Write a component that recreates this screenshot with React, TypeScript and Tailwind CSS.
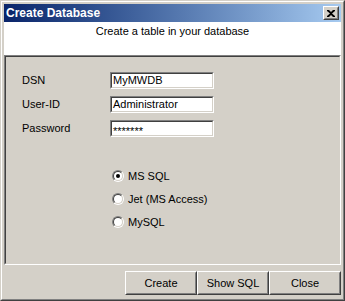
import React from 'react';

const Field: React.FC<{ label: string; value: string; masked?: boolean }> = ({ label, value, masked }) => (
    <div className="flex items-center h-[17px]">
        <span className="w-[88px] shrink-0">{label}</span>
        <div className="w-[104px] h-[17px] border border-t-[#808080] border-l-[#808080] border-r-white border-b-white">
            <div className="h-full border border-t-[#404040] border-l-[#404040] border-r-[#d4d0c8] border-b-[#d4d0c8] bg-white pl-[1px] leading-[13px] overflow-hidden">
                {masked ? <span className="inline-block pt-[3px] text-[11px] tracking-[0px]">{value}</span> : value}
            </div>
        </div>
    </div>
);

const Radio: React.FC<{ label: string; checked?: boolean }> = ({ label, checked }) => (
    <div className="flex items-center gap-[4px] h-[14px]">
        <div className="w-[12px] h-[12px] rounded-full border border-t-[#808080] border-l-[#808080] border-r-white border-b-white shrink-0">
            <div className="w-full h-full rounded-full border border-t-[#404040] border-l-[#404040] border-r-[#d4d0c8] border-b-[#d4d0c8] bg-white flex items-center justify-center">
                {checked && <div className="w-[4px] h-[4px] rounded-full bg-black" />}
            </div>
        </div>
        <span>{label}</span>
    </div>
);

const Button: React.FC<{ label: string }> = ({ label }) => (
    <div className="w-[72px] h-[24px] border border-t-white border-l-white border-r-[#404040] border-b-[#404040]">
        <div className="h-full border border-t-[#d4d0c8] border-l-[#d4d0c8] border-r-[#808080] border-b-[#808080] flex items-center justify-center">
            {label}
        </div>
    </div>
);

export default function App() {
    return (
        <div className="w-[345px] h-[301px] bg-[#d4d0c8] border border-t-[#d4d0c8] border-l-[#d4d0c8] border-r-[#404040] border-b-[#404040] font-['Liberation_Sans',Arial,sans-serif] text-[11px] text-black">
            <div className="h-full border border-t-white border-l-white border-r-[#808080] border-b-[#808080] p-[2px] flex flex-col">
                {/* title bar */}
                <div className="h-[18px] shrink-0 bg-gradient-to-r from-[#0a246a] to-[#a6caf0] flex items-center justify-between pl-[2px] pr-[2px]">
                    <span className="text-white font-bold text-[12px] leading-none">Create Database</span>
                    <div className="w-[16px] h-[14px] border border-t-white border-l-white border-r-[#404040] border-b-[#404040] bg-[#d4d0c8]">
                        <div className="h-full border border-t-[#d4d0c8] border-l-[#d4d0c8] border-r-[#808080] border-b-[#808080] flex items-center justify-center">
                            <svg width="8" height="7" viewBox="0 0 8 7">
                                <path d="M0 0h2l2 2 2-2h2v1L5 3.5 8 6v1H6L4 5 2 7H0V6l3-2.5L0 1z" fill="black" />
                            </svg>
                        </div>
                    </div>
                </div>

                {/* header */}
                <div className="h-[33px] shrink-0 bg-white text-center text-[11px] leading-[16px] pt-[1px]">
                    Create a table in your database
                </div>

                {/* content panel */}
                <div className="h-[210px] shrink-0 border border-t-[#808080] border-l-[#808080] border-r-white border-b-white">
                    <div className="h-full border border-t-[#404040] border-l-[#404040] border-r-[#d4d0c8] border-b-[#d4d0c8] pt-[15px] pl-[16px]">
                        <div className="flex flex-col gap-[7px]">
                            <Field label="DSN" value="MyMWDB" />
                            <Field label="User-ID" value="Administrator" />
                            <Field label="Password" value="*******" masked />
                        </div>
                        <div className="flex flex-col gap-[9px] mt-[32px] ml-[90px]">
                            <Radio label="MS SQL" checked />
                            <Radio label="Jet (MS Access)" />
                            <Radio label="MySQL" />
                        </div>
                    </div>
                </div>

                {/* buttons */}
                <div className="flex-1 flex justify-end items-start pt-[6px]">
                    <Button label="Create" />
                    <Button label="Show SQL" />
                    <Button label="Close" />
                </div>
            </div>
        </div>
    );
}
